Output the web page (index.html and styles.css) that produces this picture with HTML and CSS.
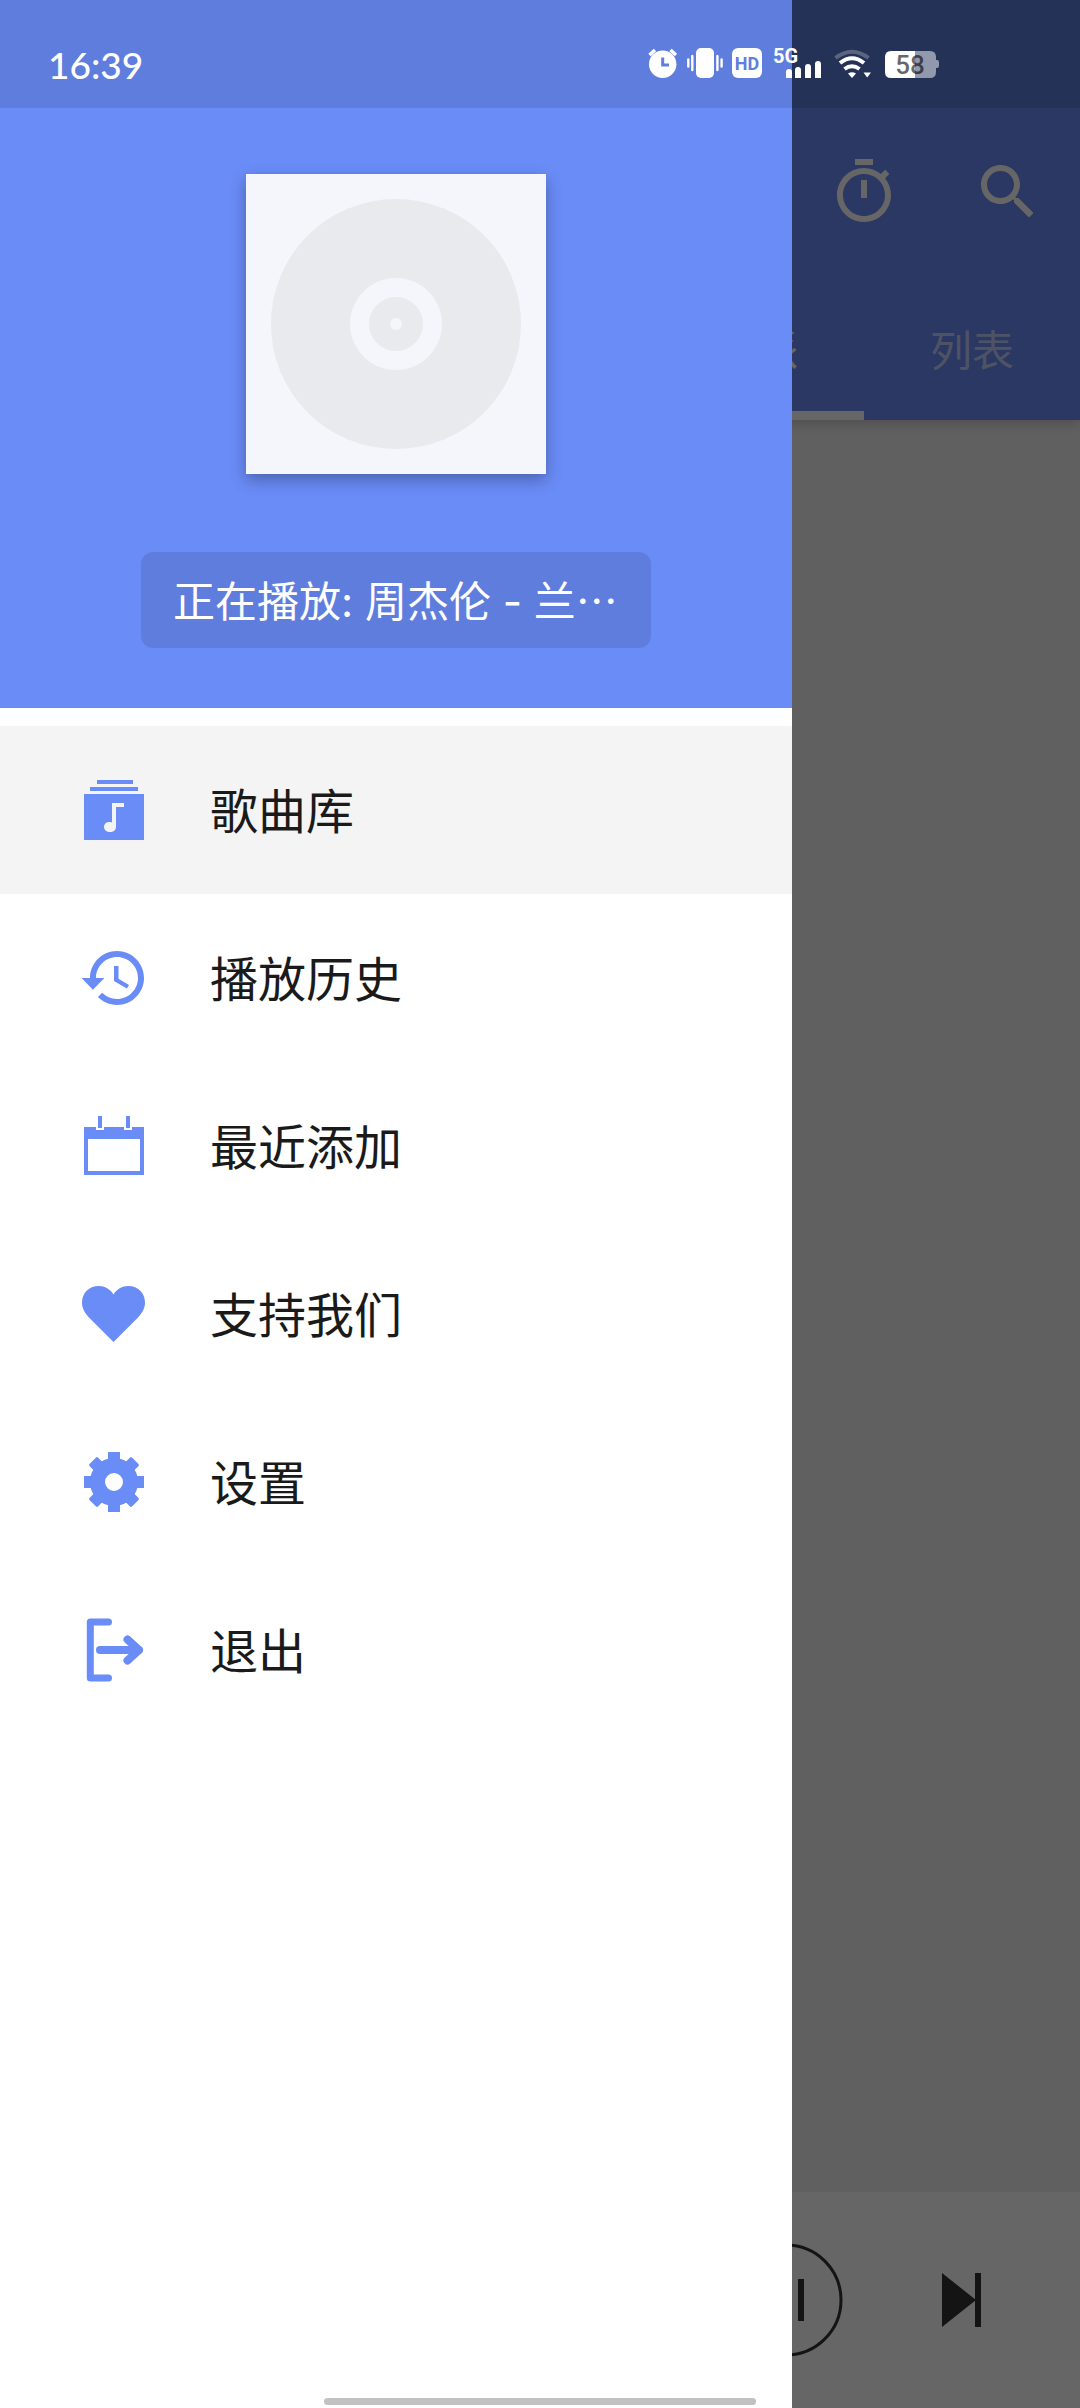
FILE: index.html
```html
<!DOCTYPE html>
<html lang="zh-CN">
<head>
<meta charset="utf-8">
<meta name="viewport" content="width=device-width, initial-scale=1">
<title>音乐</title>
<link rel="stylesheet" href="styles.css">
</head>
<body>
<div class="screen">
  <div class="app">
    <header class="app-bar">
      <div class="toolbar">
        <button class="icon-button" aria-label="定时">
          <svg class="icon" viewBox="0 0 24 24"><path d="M15 1H9v2h6V1zm-4 13h2V8h-2v6zm8.03-6.61l1.42-1.42c-.43-.51-.9-.99-1.41-1.41l-1.42 1.42C16.07 4.74 14.12 4 12 4c-4.97 0-9 4.03-9 9s4.02 9 9 9 9-4.03 9-9c0-2.12-.74-4.07-1.97-5.61zM12 20c-3.87 0-7-3.13-7-7s3.13-7 7-7 7 3.13 7 7-3.13 7-7 7z"/></svg>
        </button>
        <button class="icon-button" aria-label="搜索">
          <svg class="icon" viewBox="0 0 24 24"><path d="M15.5 14h-.79l-.28-.27C15.41 12.59 16 11.11 16 9.5 16 5.91 13.09 3 9.5 3S3 5.91 3 9.5 5.91 16 9.5 16c1.61 0 3.09-.59 4.23-1.57l.27.28v.79l5 4.99L20.49 19l-4.99-5zm-6 0C7.01 14 5 11.99 5 9.5S7.01 5 9.5 5 14 7.01 14 9.5 11.99 14 9.5 14z"/></svg>
        </button>
      </div>
      <div class="tabs">
        <button class="tab tab-active">流派</button>
        <button class="tab">列表</button>
      </div>
    </header>
    <main class="content"></main>
    <footer class="player">
      <button class="icon-button" aria-label="暂停">
        <svg class="icon-play" viewBox="0 0 120 120"><circle cx="60" cy="60" r="55" fill="none" stroke="currentColor" stroke-width="3"/><path d="M42 39h6v42h-6zM72 39h6v42h-6z"/></svg>
      </button>
      <button class="icon-button" aria-label="下一首">
        <svg class="icon" viewBox="0 0 72 72"><path d="M18 9l34 27-34 27zM51 9h6v54h-6z"/></svg>
      </button>
    </footer>
  </div>

  <div class="scrim"></div>

  <aside class="drawer">
    <div class="drawer-header">
      <svg class="cover" viewBox="0 0 300 300">
        <circle cx="150" cy="150" r="125" fill="#e8eaee"/>
        <circle cx="150" cy="150" r="46" fill="#f4f6fb"/>
        <circle cx="150" cy="150" r="27" fill="#e8eaee"/>
        <circle cx="150" cy="150" r="6" fill="#f4f6fb"/>
      </svg>
      <button class="now-playing">正在播放: 周杰伦 - 兰<span class="more">⋯</span></button>
    </div>
    <nav class="menu">
      <a class="menu-item menu-item-active" href="#library">
        <svg class="icon" viewBox="0 0 72 72"><path fill-rule="evenodd" d="M19 6h36v4H19zM12 13h48v4H12zM6 20h60v46H6zM34 29V48.5C30 47 26 49 26 53C26 56 29 58 32 58C35.5 58 38 56 38 53V33H46V29z"/></svg>
        <span class="menu-label">歌曲库</span>
      </a>
      <a class="menu-item" href="#history">
        <svg class="icon" viewBox="0 0 24 24"><path d="M13 3c-4.97 0-9 4.03-9 9H1.2l3.77 3.95L8.8 12H6c0-3.87 3.13-7 7-7s7 3.13 7 7-3.13 7-7 7c-1.93 0-3.68-.79-4.94-2.06l-1.42 1.42C8.27 19.99 10.51 21 13 21c4.97 0 9-4.03 9-9s-4.03-9-9-9zm-1 5v5l4.28 2.54.72-1.21-3.5-2.08V8H12z"/></svg>
        <span class="menu-label">播放历史</span>
      </a>
      <a class="menu-item" href="#recent">
        <svg class="icon" viewBox="0 0 72 72"><path fill-rule="evenodd" d="M20 6h4v12h-4zM48 6h4v12h-4zM6 17h12v3h8v-3h20v3h8v-3h12v48H6zM10 29v32h52V29z"/></svg>
        <span class="menu-label">最近添加</span>
      </a>
      <a class="menu-item" href="#support">
        <svg class="icon" viewBox="0 0 72 72"><path d="M35.5 64L11 39.5C6 34 4 29.5 4 24.5C4 15 11 8 20.5 8C27 8 32 11 35.5 16.5C39 11 44 8 50.5 8C60 8 67 15 67 24.5C67 29.5 65 34 60 39.5Z"/></svg>
        <span class="menu-label">支持我们</span>
      </a>
      <a class="menu-item" href="#settings">
        <svg class="icon" viewBox="0 0 72 72">
          <circle cx="36" cy="36" r="16.5" fill="none" stroke="currentColor" stroke-width="15"/>
          <path d="M30 6h12v9H30zM30 57h12v9H30zM6 30h9v12H6zM57 30h9v12h-9z"/>
          <path transform="rotate(45 36 36)" d="M30 7l1-1h10l1 1v8H30zM30 57h12v8l-1 1H31l-1-1zM7 30h8v12H7l-1-1V31zM57 30h8l1 1v10l-1 1h-8z"/>
        </svg>
        <span class="menu-label">设置</span>
      </a>
      <a class="menu-item" href="#exit">
        <svg class="icon" viewBox="0 0 72 72"><g fill="none" stroke="currentColor" stroke-linecap="round" stroke-linejoin="round"><path stroke-width="7" d="M30.5 8H12.3V64H30.5"/><path stroke-width="8" d="M22 36H61M49.5 25.5L61 36L49.5 46.5"/></g></svg>
        <span class="menu-label">退出</span>
      </a>
    </nav>
  </aside>

  <div class="status-bar">
    <time class="clock">16:39</time>
    <div class="status-icons">
      <svg width="30" height="30" viewBox="0 0 30 30"><circle cx="14.7" cy="16.3" r="13.7"/><path d="M1.5 7L7 2M22.5 2L28 7" stroke="currentColor" stroke-width="3.5"/><path class="cutout" d="M14.7 9.5V17H21"/></svg>
      <svg width="36" height="30" viewBox="0 0 36 30"><rect x="9" width="18" height="30" rx="5"/><path d="M5.3 8v14M1.3 11.5v7M30.4 8v14M34.6 11.5v7" stroke="currentColor" stroke-width="2.4" stroke-linecap="round"/></svg>
      <svg width="30" height="30" viewBox="0 0 30 30"><rect width="30" height="30" rx="6"/><text class="hd" x="15" y="22" text-anchor="middle">HD</text></svg>
      <svg width="54" height="30" viewBox="0 0 54 30"><text class="network" x="2" y="15">5G</text><path d="M15 30v-6q0-3 3-3t3 3v6zM24 30v-8q0-3 3-3t3 3v8zM34 30V19q0-3 3-3t3 3v11zM44 30V16q0-3 3-3t3 3v14z"/></svg>
      <svg width="42" height="30" viewBox="0 0 42 30"><g fill="none" stroke="currentColor" stroke-width="4"><path opacity=".25" d="M1.5 10Q18 -2.5 34.500 10"/><path d="M6 15Q18 5.5 30 15"/><path d="M10.5 21Q18 15.5 25.5 21"/></g><path d="M14 25.5Q18 23 22 25.5L18 30zM29.5 24.5h7.500L33.2 29.5z"/></svg>
      <svg width="54" height="30" viewBox="0 0 54 30"><path opacity=".5" d="M30 3h15q6 0 6 6v3h1q2 0 2 2v4q0 2-2 2h-1v4q0 6-6 6H30z"/><path d="M30 3H6Q0 3 0 9v15q0 6 6 6h24z"/><text class="battery" x="25" y="26" text-anchor="middle">58</text></svg>
    </div>
  </div>
  <div class="home-indicator"></div>
</div>
</body>
</html>
```
FILE: styles.css
```css
:root {
  --accent: #6a8cf7;
  --text: #1a1a1a;
}

* {
  box-sizing: border-box;
}

body {
  margin: 0;
  font-family: Inter, "Noto Sans CJK SC", sans-serif;
  color: var(--text);
}

button {
  border: 0;
  padding: 0;
  background: none;
  color: inherit;
  font: inherit;
}

svg {
  display: block;
  flex: none;
  overflow: visible;
  fill: currentColor;
}

.icon {
  width: 72px;
  height: 72px;
}

.icon-play {
  width: 120px;
  height: 120px;
}

.screen {
  position: relative;
  min-height: 100vh;
  overflow: hidden;
}

/* Library screen behind the drawer */
.app {
  display: flex;
  flex-direction: column;
  min-height: 100vh;
  background: #f0f0f0;
}

.app-bar {
  padding-top: 108px;
  background: var(--accent);
  color: #fff;
  box-shadow: 0 3px 12px rgba(0, 0, 0, 0.2);
}

.toolbar {
  display: flex;
  justify-content: flex-end;
  align-items: center;
  gap: 72px;
  height: 168px;
  padding-right: 36px;
}

.tabs {
  display: flex;
  justify-content: flex-end;
  height: 144px;
}

.tab {
  width: 20%;
  padding-top: 14px;
  border-bottom: 9px solid transparent;
  font-size: 42px;
  line-height: 60px;
  color: rgba(255, 255, 255, 0.6);
}

.tab-active {
  border-bottom-color: #fff;
  color: #fff;
}

.content {
  flex: 1;
}

.player {
  display: flex;
  justify-content: flex-end;
  align-items: center;
  gap: 78px;
  height: 216px;
  padding-right: 84px;
  background: #fff;
  color: #333;
}

.scrim {
  position: absolute;
  inset: 0;
  background: rgba(0, 0, 0, 0.6);
}

/* Navigation drawer */
.drawer {
  position: absolute;
  inset: 0 288px 0 0;
  background: #fff;
}

.drawer-header {
  display: flex;
  flex-direction: column;
  align-items: center;
  gap: 78px;
  padding: 174px 32px 60px;
  background: var(--accent);
}

.cover {
  width: 300px;
  height: 300px;
  background: #f4f6fb;
  box-shadow: 0 6px 15px rgba(0, 0, 0, 0.3);
}

.now-playing {
  width: 510px;
  height: 96px;
  padding: 0 32px;
  border-radius: 12px;
  background: rgba(0, 0, 0, 0.1);
  color: #fff;
  font-size: 42px;
  line-height: 60px;
  text-align: left;
  white-space: nowrap;
}

.more {
  font-family: "Noto Sans CJK SC", sans-serif;
}

.menu {
  padding-top: 18px;
}

.menu-item {
  display: flex;
  align-items: center;
  gap: 60px;
  height: 168px;
  padding: 0 78px;
  color: var(--text);
  font-size: 48px;
  line-height: 72px;
  text-decoration: none;
}

.menu-label {
  padding-top: 4px;
}

.menu-item .icon {
  color: var(--accent);
}

.menu-item-active {
  background: #f4f4f4;
}

/* System overlays */
.status-bar {
  position: absolute;
  inset: 0 0 auto 0;
  display: flex;
  justify-content: space-between;
  align-items: center;
  height: 108px;
  padding: 18px 141px 0 48px;
  background: rgba(0, 0, 0, 0.1);
  color: #fff;
}

.clock {
  padding-top: 4px;
  font-family: Lato, sans-serif;
  font-size: 37px;
  font-weight: 500;
  line-height: 48px;
}

.status-icons {
  display: flex;
  gap: 9px;
}

.cutout {
  fill: none;
  stroke: #5f7ede;
  stroke-width: 3px;
}

.hd,
.network,
.battery {
  font-family: Roboto, sans-serif;
  font-weight: 700;
}

.hd {
  fill: #5f7ede;
  font-size: 18px;
}

.network {
  font-size: 20px;
}

.battery {
  fill: rgba(0, 0, 0, 0.6);
  font-size: 26px;
  font-weight: 500;
}

.home-indicator {
  position: absolute;
  bottom: 3px;
  left: 30%;
  width: 40%;
  height: 7px;
  border-radius: 4px;
  background: #c1c1c1;
}
```
